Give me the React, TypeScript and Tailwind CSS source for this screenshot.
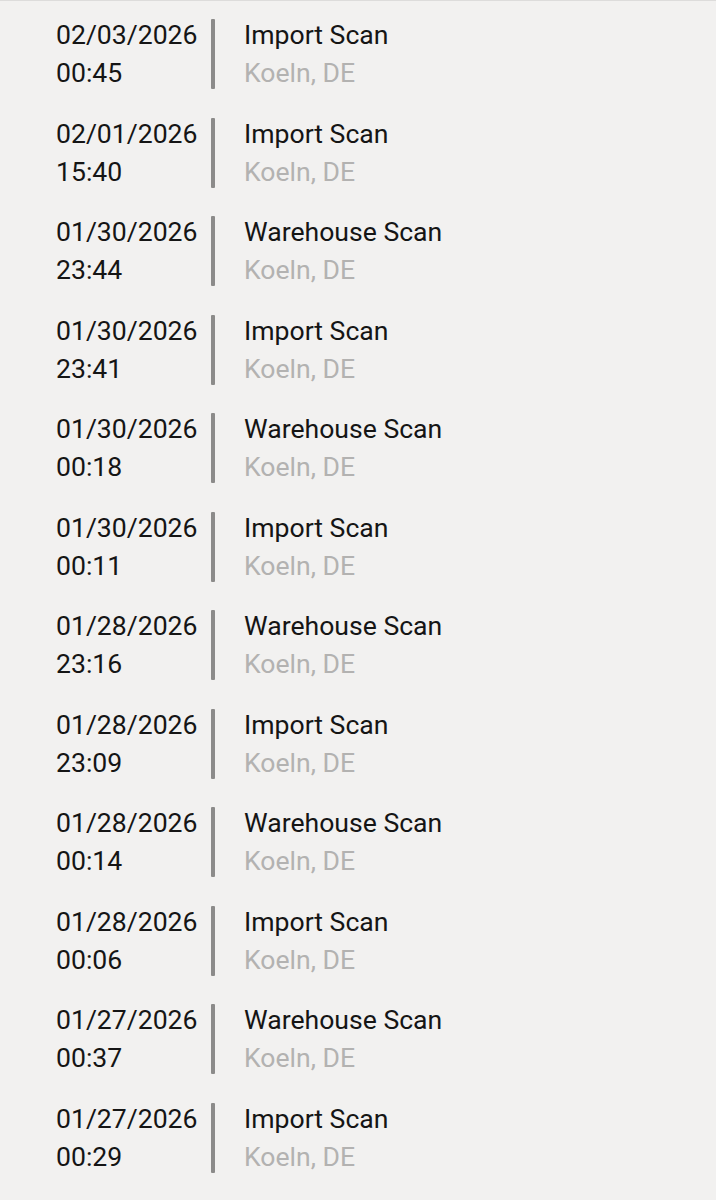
const events = [
  { date: '02/03/2026', time: '00:45', title: 'Import Scan' },
  { date: '02/01/2026', time: '15:40', title: 'Import Scan' },
  { date: '01/30/2026', time: '23:44', title: 'Warehouse Scan' },
  { date: '01/30/2026', time: '23:41', title: 'Import Scan' },
  { date: '01/30/2026', time: '00:18', title: 'Warehouse Scan' },
  { date: '01/30/2026', time: '00:11', title: 'Import Scan' },
  { date: '01/28/2026', time: '23:16', title: 'Warehouse Scan' },
  { date: '01/28/2026', time: '23:09', title: 'Import Scan' },
  { date: '01/28/2026', time: '00:14', title: 'Warehouse Scan' },
  { date: '01/28/2026', time: '00:06', title: 'Import Scan' },
  { date: '01/27/2026', time: '00:37', title: 'Warehouse Scan' },
  { date: '01/27/2026', time: '00:29', title: 'Import Scan' },
]

export default function App() {
  return (
    <div
      className="min-h-[1200px] w-full bg-[#f2f1f0] border-t border-[#dddcdb]"
      style={{ fontFamily: 'Roboto, "Noto Sans", sans-serif' }}
    >
      <ul className="pl-[56px]">
        {events.map((ev, i) => (
          <li key={i} className="flex h-[98.55px] pt-[15px]">
            {/* date + time */}
            <div className="w-[155px] text-[26.6px] leading-[38px] text-[#151515]">
              <div>{ev.date}</div>
              <div>{ev.time}</div>
            </div>
            {/* timeline bar */}
            <div className="w-[4px] h-[70px] mt-[3px] bg-[#8c8b8a] rounded-[1px]" />
            {/* event */}
            <div className="ml-[29px] text-[26.6px] leading-[38px]">
              <div className="text-[#151515]">{ev.title}</div>
              <div className="text-[#b3b2b1]">Koeln, DE</div>
            </div>
          </li>
        ))}
      </ul>
    </div>
  )
}
